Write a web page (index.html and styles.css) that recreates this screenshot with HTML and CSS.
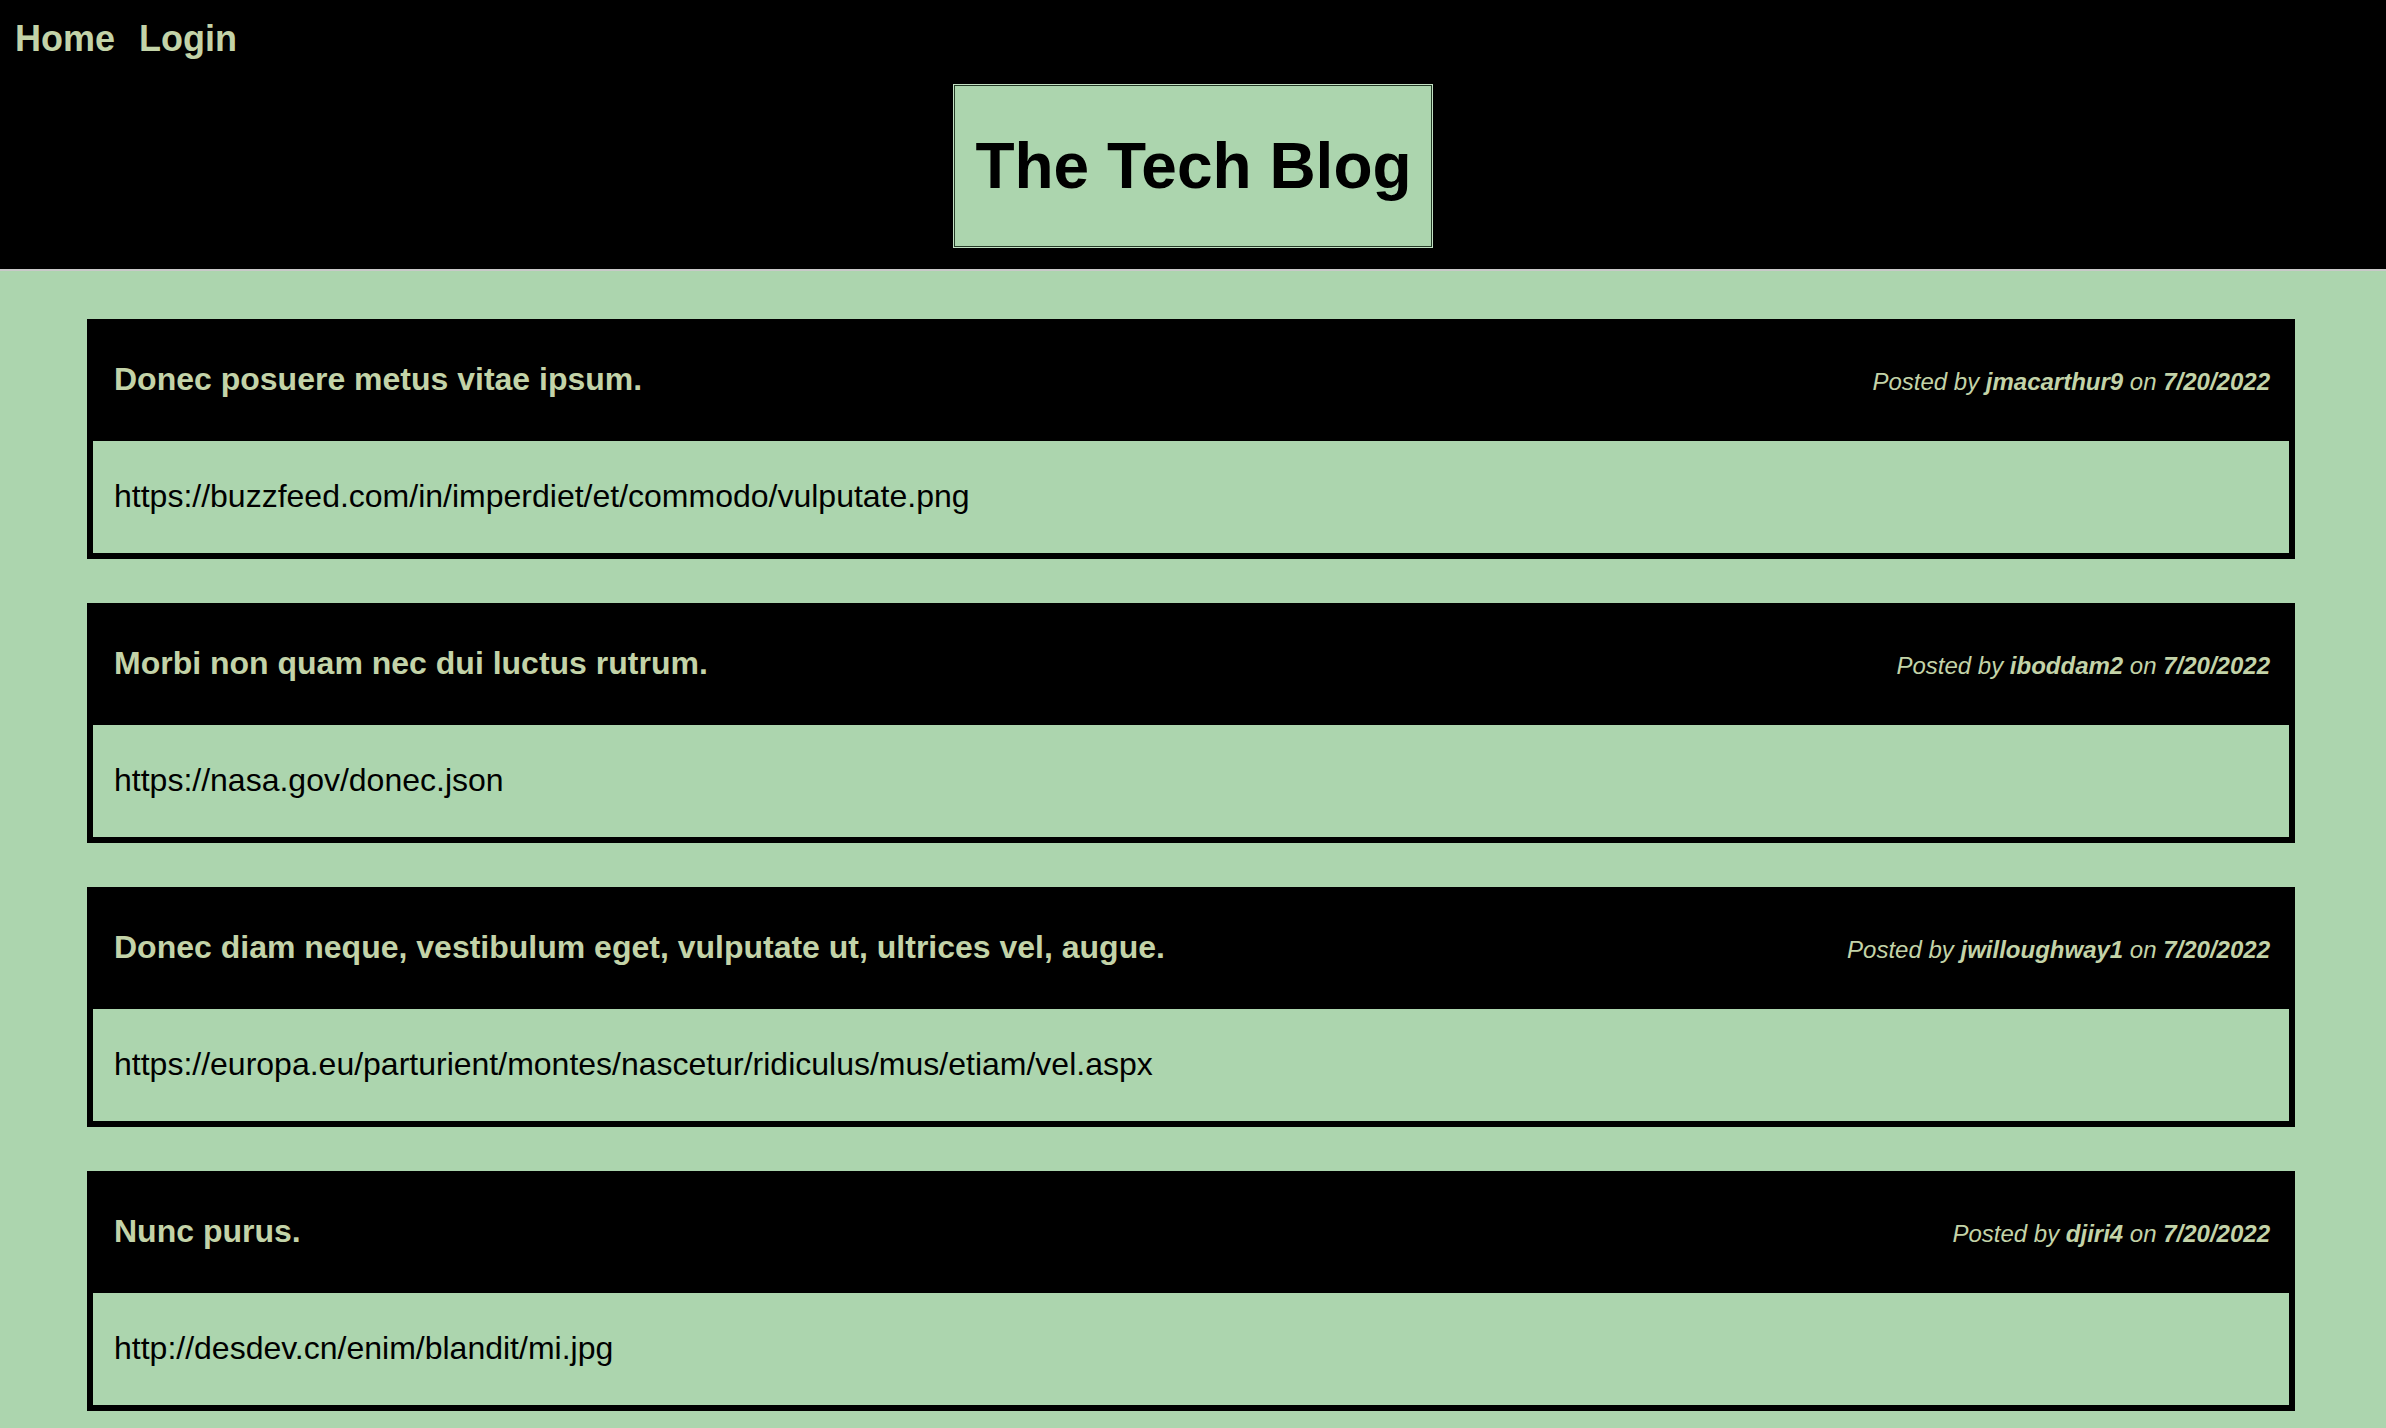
FILE: index.html
```html
<!DOCTYPE html>
<html lang="en">
<head>
<meta charset="utf-8">
<title>The Tech Blog</title>
<link rel="stylesheet" href="styles.css">
</head>
<body>
<header class="site-header">
  <nav class="nav">
    <a class="nav-link" href="#">Home</a>
    <a class="nav-link" href="#">Login</a>
  </nav>
  <div class="brand-wrap">
    <div class="brand"><h1 class="brand-title">The Tech Blog</h1></div>
  </div>
</header>
<main class="posts">
  <article class="post">
    <div class="post-head">
      <h2 class="post-title">Donec posuere metus vitae ipsum.</h2>
      <p class="post-meta">Posted by <strong>jmacarthur9</strong> on <strong>7/20/2022</strong></p>
    </div>
    <div class="post-body">https://buzzfeed.com/in/imperdiet/et/commodo/vulputate.png</div>
  </article>
  <article class="post">
    <div class="post-head">
      <h2 class="post-title">Morbi non quam nec dui luctus rutrum.</h2>
      <p class="post-meta">Posted by <strong>iboddam2</strong> on <strong>7/20/2022</strong></p>
    </div>
    <div class="post-body">https://nasa.gov/donec.json</div>
  </article>
  <article class="post">
    <div class="post-head">
      <h2 class="post-title">Donec diam neque, vestibulum eget, vulputate ut, ultrices vel, augue.</h2>
      <p class="post-meta">Posted by <strong>jwilloughway1</strong> on <strong>7/20/2022</strong></p>
    </div>
    <div class="post-body">https://europa.eu/parturient/montes/nascetur/ridiculus/mus/etiam/vel.aspx</div>
  </article>
  <article class="post">
    <div class="post-head">
      <h2 class="post-title">Nunc purus.</h2>
      <p class="post-meta">Posted by <strong>djiri4</strong> on <strong>7/20/2022</strong></p>
    </div>
    <div class="post-body">http://desdev.cn/enim/blandit/mi.jpg</div>
  </article>
</main>
</body>
</html>
```

FILE: styles.css
```css
html, body {
  margin: 0;
  padding: 0;
}

body {
  background: #acd5ae;
  font-family: "Liberation Sans", Arial, Helvetica, sans-serif;
  color: #000;
}

.site-header {
  background: #000;
  border-bottom: 2px solid #c9c9c9;
  padding: 18px 0 21px;
}

.nav {
  display: flex;
  gap: 24px;
  padding: 0 15px;
}

.nav-link {
  color: #c3d3a8;
  font-size: 36px;
  font-weight: bold;
  text-decoration: none;
  line-height: 41px;
}

.brand-wrap {
  display: flex;
  justify-content: center;
  margin-top: 25px;
}

.brand {
  background: #acd5ae;
  border: 1px solid #c3e0c3;
  box-shadow: inset 0 0 0 1px #233a26;
  padding: 1px 20px 1px 21px;
}

.brand-title {
  margin: 43px 0;
  font-size: 64px;
  font-weight: bold;
  line-height: 74px;
  color: #000;
}

.posts {
  display: flex;
  flex-direction: column;
  gap: 44px;
  padding: 48px 91px 0 87px;
}

.post {
  background: #000;
  border: 6px solid #000;
}

.post-head {
  display: flex;
  justify-content: space-between;
  align-items: baseline;
  padding: 36px 19px 43px 21px;
  color: #c3d3a8;
}

.post-title {
  margin: 0;
  font-size: 32px;
  font-weight: bold;
  line-height: 37px;
}

.post-meta {
  margin: 0;
  font-size: 24px;
  font-style: italic;
  line-height: 28px;
}

.post-meta strong {
  font-weight: bold;
}

.post-body {
  background: #acd5ae;
  font-size: 32px;
  line-height: 37px;
  padding: 37px 20px 38px 21px;
}
```
